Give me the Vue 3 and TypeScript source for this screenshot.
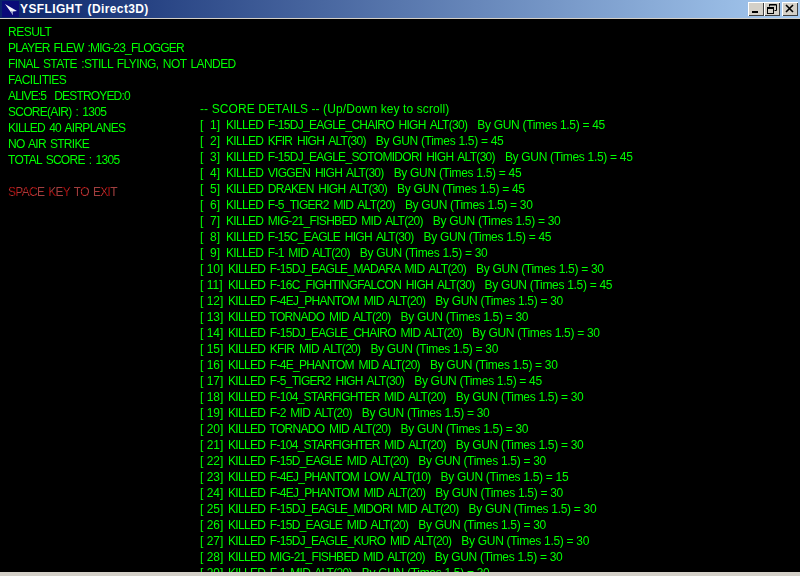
<script setup lang="ts">
interface Line { text: string; fit: string }
const left: Line[] = [
  { text: 'RESULT', fit: 'solid' },
  { text: 'PLAYER FLEW :MIG-23_FLOGGER', fit: 'tight' },
  { text: 'FINAL STATE :STILL FLYING, NOT LANDED', fit: 'loose' },
  { text: 'FACILITIES', fit: 'solid' },
  { text: 'ALIVE:5  DESTROYED:0', fit: 'tight' },
  { text: 'SCORE(AIR) : 1305', fit: '' },
  { text: 'KILLED 40 AIRPLANES', fit: '' },
  { text: 'NO AIR STRIKE', fit: '' },
  { text: 'TOTAL SCORE : 1305', fit: '' },
]
const kills: [string, string, number][] = [
  ['F-15DJ_EAGLE_CHAIRO', 'HIGH', 30],
  ['KFIR', 'HIGH', 30],
  ['F-15DJ_EAGLE_SOTOMIDORI', 'HIGH', 30],
  ['VIGGEN', 'HIGH', 30],
  ['DRAKEN', 'HIGH', 30],
  ['F-5_TIGER2', 'MID', 20],
  ['MIG-21_FISHBED', 'MID', 20],
  ['F-15C_EAGLE', 'HIGH', 30],
  ['F-1', 'MID', 20],
  ['F-15DJ_EAGLE_MADARA', 'MID', 20],
  ['F-16C_FIGHTINGFALCON', 'HIGH', 30],
  ['F-4EJ_PHANTOM', 'MID', 20],
  ['TORNADO', 'MID', 20],
  ['F-15DJ_EAGLE_CHAIRO', 'MID', 20],
  ['KFIR', 'MID', 20],
  ['F-4E_PHANTOM', 'MID', 20],
  ['F-5_TIGER2', 'HIGH', 30],
  ['F-104_STARFIGHTER', 'MID', 20],
  ['F-2', 'MID', 20],
  ['TORNADO', 'MID', 20],
  ['F-104_STARFIGHTER', 'MID', 20],
  ['F-15D_EAGLE', 'MID', 20],
  ['F-4EJ_PHANTOM', 'LOW', 10],
  ['F-4EJ_PHANTOM', 'MID', 20],
  ['F-15DJ_EAGLE_MIDORI', 'MID', 20],
  ['F-15D_EAGLE', 'MID', 20],
  ['F-15DJ_EAGLE_KURO', 'MID', 20],
  ['MIG-21_FISHBED', 'MID', 20],
  ['F-1', 'MID', 20],
]
const rows = kills.map((k, i) => ({
  n: i + 1,
  idx: i + 1 < 10 ? `[  ${i + 1}]` : `[ ${i + 1}]`,
  what: `KILLED ${k[0]} ${k[1]} ALT(${k[2]})`,
  how: `By GUN (Times 1.5) = ${k[2] * 1.5}`,
}))
</script>

<template>
  <div class="window">
    <svg class="defs" width="0" height="0" aria-hidden="true">
      <filter id="crisp-green" x="0" y="0" width="100%" height="100%" color-interpolation-filters="sRGB">
        <feComponentTransfer>
          <feFuncR type="linear" slope="0" />
          <feFuncG type="discrete" tableValues="0 0 1 1" />
          <feFuncB type="linear" slope="0" />
        </feComponentTransfer>
      </filter>
      <filter id="crisp-red" x="0" y="0" width="100%" height="100%" color-interpolation-filters="sRGB">
        <feComponentTransfer>
          <feFuncR type="discrete" tableValues="0 0 0.63 0.63 0.63 0.63 0.63 0.63" />
          <feFuncG type="discrete" tableValues="0 0 0.25 0.25 0.25 0.25 0.25 0.25" />
          <feFuncB type="discrete" tableValues="0 0 0.25 0.25 0.25 0.25 0.25 0.25" />
        </feComponentTransfer>
      </filter>
    </svg>
    <header class="titlebar">
      <svg class="app-icon" width="17" height="16" viewBox="0 0 17 16">
        <rect width="17" height="16" fill="#0a0a78" />
        <path d="M3 3 L15 10 L11 10.5 L11 14 L8 10 Z" fill="#f0f0f8" />
        <path d="M8 10 L11 10.5 L11 14 Z" fill="#8f96c4" />
      </svg>
      <span class="title">YSFLIGHT (Direct3D)</span>
      <div class="controls">
        <button class="ctl">
          <svg width="16" height="14" viewBox="0 0 16 14"><rect x="4" y="9" width="6" height="2" fill="#000" /></svg>
        </button>
        <button class="ctl">
          <svg width="16" height="14" viewBox="0 0 16 14" fill="none" stroke="#000">
            <path d="M5.5 4.5 V2.5 H12.5 V8.5 H10.5" />
            <path d="M5 3 H12" />
            <rect x="3.5" y="5.5" width="6" height="6" />
            <path d="M3 6.5 H10" />
          </svg>
        </button>
        <button class="ctl close">
          <svg width="16" height="14" viewBox="0 0 16 14" fill="none" stroke="#000" stroke-width="1.6">
            <path d="M4 3 L11 10 M11 3 L4 10" />
          </svg>
        </button>
      </div>
    </header>
    <main class="screen">
      <section class="summary">
        <div class="green">
          <div v-for="l in left" :key="l.text" class="line" :class="l.fit">{{ l.text }}</div>
        </div>
        <div class="line"></div>
        <div class="line exit">SPACE KEY TO EXIT</div>
      </section>
      <section class="details green">
        <div class="line head">-- SCORE DETAILS -- (Up/Down key to scroll)</div>
        <div v-for="r in rows" :key="r.n" class="line row">
          <span class="idx" :class="{ wide: r.n >= 10 }">{{ r.idx }}</span>
          <span class="what">{{ r.what }}</span>
          <span class="how">{{ r.how }}</span>
        </div>
      </section>
    </main>
    <footer class="edge"></footer>
  </div>
</template>

<style scoped>
.window {
  width: 800px;
  height: 576px;
  display: flex;
  flex-direction: column;
  overflow: hidden;
  background: #d4d0c8;
  font-family: "Liberation Sans", Arial, sans-serif;
}
.defs { position: absolute; }
.titlebar {
  height: 18px;
  flex: none;
  display: flex;
  align-items: center;
  gap: 1px;
  padding: 0 2px;
  background: linear-gradient(90deg, #0a246a 0%, #a6caf0 100%);
  border-bottom: 1px solid #d4d0c8;
}
.title {
  color: #fff;
  font-weight: 700;
  font-size: 12px;
  letter-spacing: 0.38px;
  word-spacing: 1.5px;
  white-space: pre;
}
.controls {
  margin-left: auto;
  display: flex;
  align-items: center;
}
.ctl {
  width: 16px;
  height: 14px;
  padding: 0;
  margin: 0;
  background: #d4d0c8;
  border: none;
  box-shadow: inset 1px 1px 0 #fff, inset -1px -1px 0 #404040;
  display: block;
}
.ctl svg { display: block; }
.close { margin-left: 2px; }
.screen {
  flex: 1;
  min-height: 0;
  overflow: hidden;
  background: #000;
  display: flex;
  color: #00ff00;
  font-size: 12px;
  line-height: 16px;
  white-space: pre;
  padding: 5px 0 0 8px;
  letter-spacing: -0.72px;
  word-spacing: 1.5px;
}
.green { filter: url(#crisp-green); }
.summary {
  width: 192px;
  flex: none;
}
.details {
  flex: 1;
  padding-top: 76px;
  margin-top: 1px;
}
.line { height: 16px; }
.solid { letter-spacing: -0.5px; }
.tight { letter-spacing: -0.83px; }
.loose { letter-spacing: -0.58px; }
.head { letter-spacing: 0.1px; word-spacing: 0; }
.row { display: flex; }
.idx { width: 26px; letter-spacing: 0; word-spacing: 0; flex: none; }
.idx.wide { width: 28px; }
.what { letter-spacing: -0.7px; word-spacing: 2px; }
.how { margin-left: 10px; letter-spacing: -0.3px; word-spacing: 0; }
.exit { color: #a04040; filter: url(#crisp-red); }
.edge {
  height: 4px;
  flex: none;
  background: #d4d0c8;
}
</style>
